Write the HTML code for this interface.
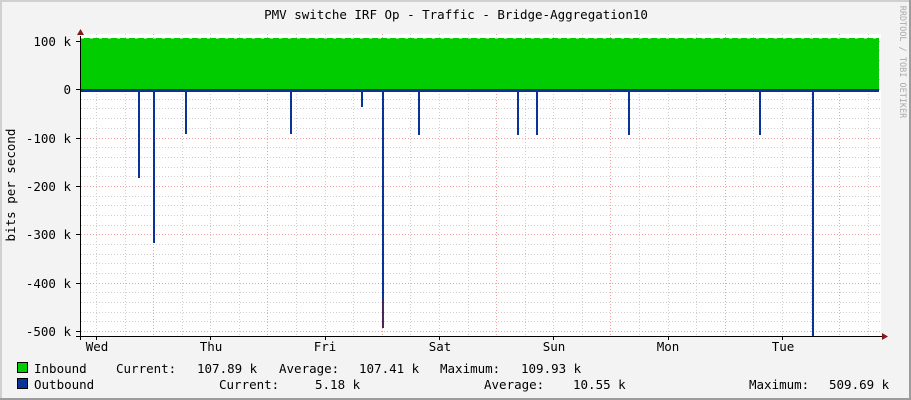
<!DOCTYPE html>
<html><head><style>
html,body{margin:0;padding:0;background:#f3f3f3;}
svg{display:block;}
text{font-family:"DejaVu Sans Mono","Liberation Mono",monospace;font-size:12.5px;fill:#000;}
</style></head><body>
<svg width="911" height="400" xmlns="http://www.w3.org/2000/svg">
<rect x="0" y="0" width="911" height="400" fill="#f3f3f3"/>
<rect x="0" y="0" width="911" height="2" fill="#d0d0d0"/>
<rect x="0" y="0" width="2" height="400" fill="#d0d0d0"/>
<rect x="0" y="398" width="911" height="2" fill="#9c9c9c"/>
<rect x="909" y="0" width="2" height="400" fill="#9c9c9c"/>
<rect x="81" y="34" width="800" height="302" fill="#fff"/>
<g stroke="#cfcfcf" stroke-dasharray="1,2" stroke-width="1">
<path d="M81 79.5H881M81 70H881M81 60.5H881M81 50.5H881M81 99.5H881M81 108.5H881M81 118.5H881M81 128.5H881M81 147.5H881M81 157.5H881M81 167.5H881M81 176.5H881M81 196.5H881M81 205.5H881M81 215.5H881M81 225.5H881M81 244.5H881M81 254.5H881M81 263.5H881M81 273.5H881M81 292.5H881M81 302.5H881M81 312.5H881M81 321.5H881"/>
<path d="M96.5 34V336M125.5 34V336M182.5 34V336M210.5 34V336M239.5 34V336M296.5 34V336M325.5 34V336M353.5 34V336M410.5 34V336M439.5 34V336M468.5 34V336M525.5 34V336M553.5 34V336M582.5 34V336M639.5 34V336M668.5 34V336M696.5 34V336M753.5 34V336M782.5 34V336M811.5 34V336M868.5 34V336"/>
</g>
<g stroke="#f0a0a0" stroke-dasharray="1,2" stroke-width="1">
<path d="M81 41.5H881M81 89.5H881M81 138.5H881M81 186.5H881M81 234.5H881M81 283.5H881M81 331.5H881"/>
<path d="M153.5 34V336M267.5 34V336M382.5 34V336M496.5 34V336M610.5 34V336M725.5 34V336M839.5 34V336"/>
</g>
<rect x="81" y="38" width="798" height="52" fill="#00cc00"/>
<path d="M81 38H879" stroke="#fff" stroke-dasharray="3,6" stroke-width="1"/>
<rect x="81" y="89" width="798" height="3" fill="#0a3398"/>
<g stroke="#0a3398" stroke-width="2" fill="none">
<path d="M139 90V178M154 90V243M186 90V134M291 90V134M362 90V107M419 90V135M518 90V135M537 90V135M629 90V135M760 90V135M813 90V336"/>
</g>
<path d="M383 90V328" stroke="#0a3398" stroke-width="2"/>
<path d="M383 300V328" stroke="#8a1a1a" stroke-width="1"/>
<g stroke="#000" stroke-width="1">
<path d="M80.5 36V340M76 336.5H884"/>
<path d="M76 41.5H81M76 89.5H81M76 138.5H81M76 186.5H81M76 234.5H81M76 283.5H81M76 331.5H81"/>
<path d="M96.5 336V340M210.5 336V340M325.5 336V340M439.5 336V340M553.5 336V340M668.5 336V340M782.5 336V340"/>
</g>
<path d="M77 35L80.5 29L84 35Z" fill="#8a1a1a"/>
<path d="M882 333L888 336.5L882 340Z" fill="#8a1a1a"/>
<text x="456" y="19" text-anchor="middle">PMV switche IRF Op - Traffic - Bridge-Aggregation10</text>
<g text-anchor="end">
<text x="71" y="46">100 k</text>
<text x="71" y="94">0</text>
<text x="71" y="143">-100 k</text>
<text x="71" y="191">-200 k</text>
<text x="71" y="239">-300 k</text>
<text x="71" y="288">-400 k</text>
<text x="71" y="336">-500 k</text>
</g>
<text transform="translate(15,185) rotate(-90)" text-anchor="middle">bits per second</text>
<text transform="translate(900,62) rotate(90)" style="font-size:8.5px;fill:#aaa" text-anchor="middle">RRDTOOL / TOBI OETIKER</text>
<g text-anchor="middle">
<text x="97" y="351">Wed</text><text x="211" y="351">Thu</text><text x="325" y="351">Fri</text>
<text x="440" y="351">Sat</text><text x="554" y="351">Sun</text><text x="668" y="351">Mon</text><text x="783" y="351">Tue</text>
</g>
<rect x="17.5" y="362.5" width="10" height="10" fill="#00cc00" stroke="#000"/>
<rect x="17.5" y="378.5" width="10" height="10" fill="#0a3398" stroke="#000"/>
<text x="34" y="373">Inbound</text><text x="116" y="373">Current:</text><text x="197" y="373">107.89 k</text>
<text x="279" y="373">Average:</text><text x="359" y="373">107.41 k</text><text x="440" y="373">Maximum:</text><text x="521" y="373">109.93 k</text>
<text x="34" y="389">Outbound</text><text x="219" y="389">Current:</text><text x="315" y="389">5.18 k</text>
<text x="484" y="389">Average:</text><text x="573" y="389">10.55 k</text><text x="749" y="389">Maximum:</text><text x="829" y="389">509.69 k</text>
</svg>
</body></html>
